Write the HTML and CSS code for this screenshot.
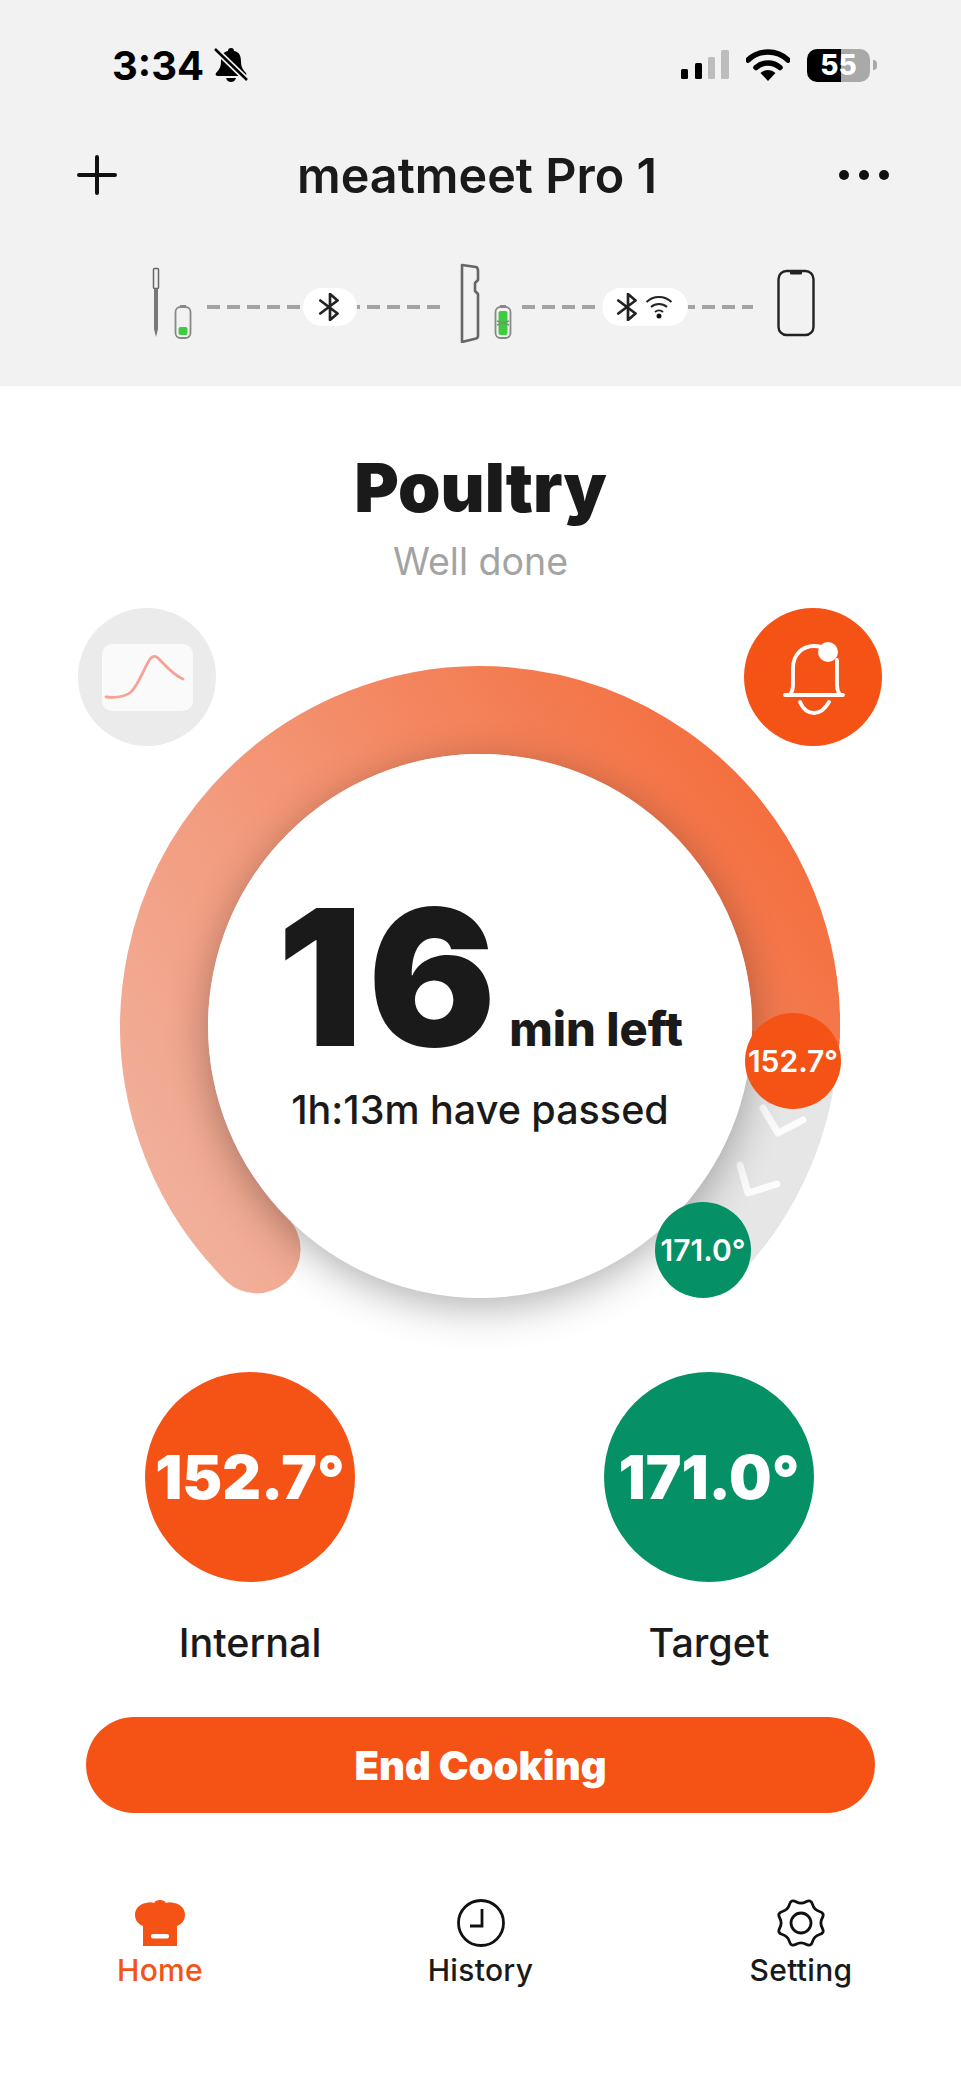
FILE: index.html
```html
<!DOCTYPE html>
<html lang="en">
<head>
    <meta charset="UTF-8">
    <meta name="viewport" content="width=device-width, initial-scale=1.0">
    <title>meatmeet Pro 1</title>
    <link rel="stylesheet" href="styles.css">
</head>
<body>
    <header class="top">
        <!-- Status bar -->
        <div class="status">
            <div class="status-left">
                <span class="clock">3:34</span>
                <svg class="mute" viewBox="0 0 34 36" width="34" height="36">
                    <path d="M17 1c-2 0-3 1-3 3C8 5 7 10 7 15c0 5-2 8-5 11-1 2 0 3 2 3h26c2 0 3-1 2-3-3-3-5-6-5-11 0-5-1-10-7-11 0-2-1-3-3-3z" fill="#000"/>
                    <path d="M12 31c1 3 3 4 5 4s4-1 5-4z" fill="#000"/>
                    <path d="M1 2l32 31" stroke="#f2f2f2" stroke-width="6"/>
                    <path d="M1 2l32 31" stroke="#000" stroke-width="2.5"/>
                </svg>
            </div>
            <div class="status-right">
                <svg viewBox="0 0 48 30" width="48" height="30">
                    <rect x="0" y="19" width="7" height="10" rx="1.5" fill="#000"/>
                    <rect x="14" y="13" width="7" height="16" rx="1.5" fill="#000"/>
                    <rect x="27" y="7" width="7" height="22" rx="1.5" fill="#bdbdbd"/>
                    <rect x="40" y="0" width="8" height="29" rx="1.5" fill="#bdbdbd"/>
                </svg>
                <svg viewBox="0 0 44 32" width="44" height="32">
                    <path d="M2 11a29 29 0 0 1 40 0" fill="none" stroke="#000" stroke-width="5.5" stroke-linecap="round"/>
                    <path d="M10 18.500a18 18 0 0 1 24 0" fill="none" stroke="#000" stroke-width="5.500" stroke-linecap="round"/>
                    <path d="M22 32l-7.500-8a11 11 0 0 1 15 0z" fill="#000"/>
                </svg>
                <div class="battery"><span>55</span></div>
                <div class="battery-nub"></div>
            </div>
        </div>

        <!-- Title bar -->
        <nav class="titlebar">
            <svg viewBox="0 0 40 40" width="40" height="40">
                <path d="M20 2v36M2 20h36" stroke="#111" stroke-width="4" stroke-linecap="round"/>
            </svg>
            <h1>meatmeet Pro 1</h1>
            <div class="dots"><i></i><i></i><i></i></div>
        </nav>

        <!-- Probe to booster to phone -->
        <div class="devices">
            <svg class="dev-probe" viewBox="0 0 8 80" width="8" height="80">
                <rect x="1.500" y="5.500" width="5" height="20" rx="1" fill="#f2f2f2" stroke="#666" stroke-width="1.500"/>
                <path d="M2 26h4v40l-2 8-2-8z" fill="#777"/>
            </svg>
            <svg class="dev-batt" viewBox="0 0 18 80" width="18" height="80">
                <path d="M6 43h6" stroke="#888" stroke-width="2"/>
                <rect x="1.500" y="44" width="15" height="31" rx="5" fill="#f2f2f2" stroke="#888" stroke-width="1.800"/>
                <rect x="4.500" y="64" width="9" height="8" rx="2" fill="#3ecb3e"/>
            </svg>
            <div class="link">
                <span class="pill">
                    <svg viewBox="0 0 22 26" width="24" height="28"><path d="M2 7l16 12-7 6V1l7 6L2 19" fill="none" stroke="#222" stroke-width="2.500" stroke-linejoin="round" stroke-linecap="round"/></svg>
                </span>
            </div>
            <svg class="dev-booster" viewBox="0 0 20 80" width="20" height="80">
                <path d="M2 2l14 2c2 .5 2 2 2 4v9l-3 3v8l3 3v42c0 1-.500 2-2 2.500L2 79z" fill="#f2f2f2" stroke="#666" stroke-width="2.600" stroke-linejoin="round"/>
            </svg>
            <svg class="dev-batt" viewBox="0 0 18 80" width="18" height="80">
                <path d="M6 43h6" stroke="#888" stroke-width="2"/>
                <rect x="1.500" y="44" width="15" height="31" rx="5" fill="#f2f2f2" stroke="#888" stroke-width="1.800"/>
                <rect x="4.500" y="48" width="9" height="24" rx="2" fill="#3ecb3e"/>
                <path d="M3 58l6 2 6-2M3 62l6-2 6 2" fill="none" stroke="#6a9a6a" stroke-width="1.500"/>
            </svg>
            <div class="link link-wide">
                <span class="pill pill-wide">
                    <svg viewBox="0 0 22 26" width="24" height="28"><path d="M2 7l16 12-7 6V1l7 6L2 19" fill="none" stroke="#222" stroke-width="2.500" stroke-linejoin="round" stroke-linecap="round"/></svg>
                    <svg viewBox="0 0 28 24" width="28" height="24">
                        <path d="M1.500 7a18 18 0 0 1 25 0M6 12a12 12 0 0 1 16 0M10 17a6 6 0 0 1 8 0" fill="none" stroke="#222" stroke-width="2"/>
                        <circle cx="14" cy="21" r="2.500" fill="#111"/>
                    </svg>
                </span>
            </div>
            <svg class="dev-phone" viewBox="0 0 38 80" width="38" height="80">
                <rect x="1.500" y="8" width="35" height="64" rx="8" fill="#f2f2f2" stroke="#222" stroke-width="2.400"/>
                <rect x="13" y="8" width="12" height="3.500" rx="1" fill="#222"/>
            </svg>
        </div>
    </header>

    <main>
        <h2 class="food">Poultry</h2>
        <p class="doneness">Well done</p>

        <div class="round-actions">
            <button class="round-btn round-chart">
                <svg viewBox="0 0 138 138" width="138" height="138">
                    <rect x="24" y="36" width="91" height="67" rx="10" fill="#fafafa"/>
                    <path d="M28 89c10 1 19 0 25-5 8-8 13-24 19-33 3-4 6-3 9 0 7 7 14 16 24 20" fill="none" stroke="#f5a394" stroke-width="2.800" stroke-linecap="round"/>
                </svg>
            </button>
            <button class="round-btn round-bell">
                <svg viewBox="0 0 138 138" width="138" height="138">
                    <path d="M41 87h58M46 87c2-3 3-6 3-10V60c0-13 9-22 21-22 5 0 9 1 13 4M93 52v25c0 4 1 7 3 10" fill="none" stroke="#fff" stroke-width="3.800" stroke-linecap="round"/>
                    <circle cx="84" cy="44" r="10" fill="#fff"/>
                    <path d="M56 94c3 7 8 11 14 11s11-4 15-11" fill="none" stroke="#fff" stroke-width="3.800" stroke-linecap="round"/>
                </svg>
            </button>
        </div>

        <div class="dial">
            <svg class="dial-ring" viewBox="0 0 720 720" width="720" height="720">
                <defs>
                    <linearGradient id="ringFill" gradientUnits="userSpaceOnUse" x1="90" y1="620" x2="690" y2="200">
                        <stop offset="0" stop-color="#f1b09b"/>
                        <stop offset="0.400" stop-color="#f39a7c"/>
                        <stop offset="1" stop-color="#f46f3f"/>
                    </linearGradient>
                </defs>
                <path d="M673 395A316 316 0 0 1 583.400 583.400" fill="none" stroke="#e6e6e6" stroke-width="88"/>
                <path d="M136.600 583.400A316 316 0 1 1 676 370" fill="none" stroke="url(#ringFill)" stroke-width="88" stroke-linecap="round"/>
                <path d="M676 370L673 395" fill="none" stroke="#f46f3f" stroke-width="88"/>
                <path d="M643 442l15 25 25-13M620 499l8 28 29-9" fill="none" stroke="#fff" stroke-opacity="0.850" stroke-width="7" stroke-linecap="round" stroke-linejoin="round"/>
            </svg>
            <div class="dial-core">
                <div class="time-row">
                    <span class="time-num">16</span>
                    <span class="time-unit">min left</span>
                </div>
                <p class="time-passed">1h:13m have passed</p>
            </div>
            <span class="temp-pin pin-internal">152.7°</span>
            <span class="temp-pin pin-target">171.0°</span>
        </div>

        <div class="temps">
            <div class="temp">
                <div class="temp-circle temp-internal">152.7°</div>
                <span class="temp-label">Internal</span>
            </div>
            <div class="temp">
                <div class="temp-circle temp-target">171.0°</div>
                <span class="temp-label">Target</span>
            </div>
        </div>

        <button class="end-btn">End Cooking</button>
    </main>

    <footer class="tabs">
        <div class="tab tab-active">
            <svg viewBox="0 0 50 48" width="50" height="48">
                <path d="M25 1c-3 0-5 1-6 3-2-1-5-1-8 0C4 5 0 10 0 16c0 5 3 9 8 11v20h34V27c5-2 8-6 8-11 0-6-4-11-11-12-3-1-6-1-8 0-1-2-3-3-6-3z" fill="#f55216"/>
                <rect x="16" y="35" width="18" height="4.500" rx="2" fill="#fff"/>
            </svg>
            <span>Home</span>
        </div>
        <div class="tab">
            <svg viewBox="0 0 50 48" width="50" height="48">
                <circle cx="25" cy="24" r="22.500" fill="none" stroke="#111" stroke-width="2.800"/>
                <path d="M26 10v17H14" fill="none" stroke="#111" stroke-width="2.800"/>
            </svg>
            <span>History</span>
        </div>
        <div class="tab">
            <svg viewBox="-25 -24 50 48" width="50" height="48">
                <path d="M21.260 4.980Q24.020 9.950 18.550 11.520Q13.080 13.080 11.520 18.550Q9.950 24.020 4.980 21.260Q0 18.500 -4.980 21.260Q-9.950 24.020 -11.520 18.550Q-13.080 13.080 -18.550 11.520Q-24.020 9.950 -21.260 4.980Q-18.500 0 -21.260 -4.980Q-24.020 -9.950 -18.550 -11.520Q-13.080 -13.080 -11.520 -18.550Q-9.950 -24.020 -4.980 -21.260Q0 -18.500 4.980 -21.260Q9.950 -24.020 11.520 -18.550Q13.080 -13.080 18.550 -11.520Q24.020 -9.950 21.260 -4.980Q18.500 0 21.260 4.980Z" fill="none" stroke="#111" stroke-width="2.800" stroke-linejoin="round"/>
                <circle cx="0" cy="0" r="10" fill="none" stroke="#111" stroke-width="2.800"/>
            </svg>
            <span>Setting</span>
        </div>
    </footer>
</body>
</html>
```

FILE: styles.css
```css
* {
    box-sizing: border-box;
}

body {
    margin: 0;
    width: 961px;
    height: 2081px;
    overflow: hidden;
    background-color: #fff;
    color: #1a1a1a;
    font-family: Inter, "Noto Sans", sans-serif;
}

/* Header */
.top {
    height: 386px;
    background-color: #f2f2f2;
    padding-top: 47px;
}

.status {
    display: flex;
    justify-content: space-between;
    align-items: center;
    height: 36px;
    padding: 0 84px 0 112px;
}

.status-left {
    display: flex;
    align-items: center;
    gap: 10px;
}

.clock {
    font-size: 40px;
    font-weight: 700;
    color: #000;
}

.status-right {
    display: flex;
    align-items: center;
}

.status-right svg + svg {
    margin-left: 17px;
}

.battery {
    width: 63px;
    height: 33px;
    margin-left: 17px;
    border-radius: 10px;
    background: linear-gradient(90deg, #000 54%, #a9a9a9 54%);
    color: #fff;
    font-size: 28px;
    font-weight: 800;
    line-height: 33px;
    text-align: center;
}

.battery-nub {
    width: 4px;
    height: 10px;
    margin-left: 3px;
    border-radius: 0 4px 4px 0;
    background-color: #a9a9a9;
}

.titlebar {
    display: flex;
    justify-content: space-between;
    align-items: center;
    height: 60px;
    margin-top: 62px;
    padding: 0 72px 0 77px;
}

.titlebar h1 {
    margin: 0 0 0 -2px;
    font-size: 48.500px;
    font-weight: 600;
}

.dots {
    display: flex;
    gap: 10px;
}

.dots i {
    width: 10px;
    height: 10px;
    border-radius: 50%;
    background-color: #111;
}

.devices {
    display: flex;
    margin-top: 58px;
    padding-left: 152px;
}

.devices svg {
    flex-shrink: 0;
}

.dev-batt {
    margin-left: 14px;
}

.link {
    display: flex;
    justify-content: center;
    align-items: center;
    width: 236px;
    height: 38px;
    margin: 25px 0 0 15px;
    background: repeating-linear-gradient(90deg, #a3a3a3 0 13px, transparent 13px 20px) 0 center / 100% 4px no-repeat;
}

.link-wide {
    width: 231px;
    margin-left: 10px;
}

.link .pill {
    margin-left: 10px;
}

.dev-booster {
    margin-left: 17px;
}

.dev-phone {
    margin-left: 24px;
}

.pill {
    display: flex;
    justify-content: center;
    align-items: center;
    width: 54px;
    height: 38px;
    border-radius: 19px;
    background-color: #fff;
}

.link .pill-wide {
    gap: 5px;
    width: 86px;
    margin-left: 14px;
}

/* Main */
main {
    display: flex;
    flex-direction: column;
    align-items: center;
}

.food {
    margin: 63px 0 0;
    font-size: 68px;
    font-weight: 900;
    line-height: 76px;
}

.doneness {
    margin: 15px 0 0;
    font-size: 37.500px;
    line-height: 44px;
    color: #a3a3a3;
}

.round-actions {
    display: flex;
    justify-content: space-between;
    width: 100%;
    margin-top: 24px;
    padding: 0 79px 0 78px;
    position: relative;
    z-index: 1;
}

.round-btn {
    width: 138px;
    height: 138px;
    padding: 0;
    border: none;
    border-radius: 50%;
}

.round-btn svg {
    display: block;
}

.round-chart {
    background-color: #ebebeb;
}

.round-bell {
    background-color: #f55216;
}

/* Dial */
.dial {
    position: relative;
    width: 720px;
    height: 640px;
    margin: -80px 1px 0 0;
}

.dial-ring {
    display: block;
}

.dial-core {
    position: absolute;
    top: 88px;
    left: 88px;
    display: flex;
    flex-direction: column;
    align-items: center;
    width: 544px;
    height: 544px;
    padding-top: 123px;
    border-radius: 50%;
    background-color: #fff;
    box-shadow: 0 10px 40px rgba(0, 0, 0, 0.3);
}

.time-row {
    display: flex;
    align-items: baseline;
    gap: 8px;
}

.time-num {
    font-size: 190px;
    font-weight: 900;
    line-height: 200px;
    letter-spacing: 5px;
}

.time-unit {
    font-size: 47px;
    font-weight: 800;
}

.time-passed {
    margin: 9px 0 0;
    font-size: 39.500px;
    font-weight: 500;
}

.temp-pin {
    position: absolute;
    display: flex;
    justify-content: center;
    align-items: center;
    width: 96px;
    height: 96px;
    border-radius: 50%;
    color: #fff;
    font-size: 30px;
    font-weight: 600;
}

.pin-internal {
    top: 347px;
    left: 625px;
    background-color: #f55216;
}

.pin-target {
    top: 536px;
    left: 535px;
    background-color: #059165;
}

/* Temperatures */
.temps {
    display: flex;
    gap: 249px;
    margin: 66px 2px 0 0;
}

.temp {
    display: flex;
    flex-direction: column;
    align-items: center;
    width: 210px;
}

.temp-circle {
    display: flex;
    justify-content: center;
    align-items: center;
    width: 210px;
    height: 210px;
    border-radius: 50%;
    color: #fff;
    font-size: 60px;
    font-weight: 900;
}

.temp-internal {
    background-color: #f55216;
}

.temp-target {
    background-color: #059165;
}

.temp-label {
    margin-top: 37px;
    font-size: 39.500px;
    font-weight: 500;
}

.end-btn {
    width: 789px;
    height: 96px;
    margin-top: 50px;
    border: none;
    border-radius: 48px;
    background-color: #f55216;
    color: #fff;
    font-family: inherit;
    font-size: 40px;
    font-weight: 900;
}

/* Tab bar */
.tabs {
    display: flex;
    justify-content: space-between;
    margin-top: 86px;
    padding: 0 110px;
}

.tab {
    display: flex;
    flex-direction: column;
    align-items: center;
    width: 100px;
    font-size: 30px;
    font-weight: 450;
    letter-spacing: 0.3px;
}

.tab svg {
    display: block;
}

.tab span {
    margin-top: 5px;
}

.tab-active {
    color: #f55216;
}
```
